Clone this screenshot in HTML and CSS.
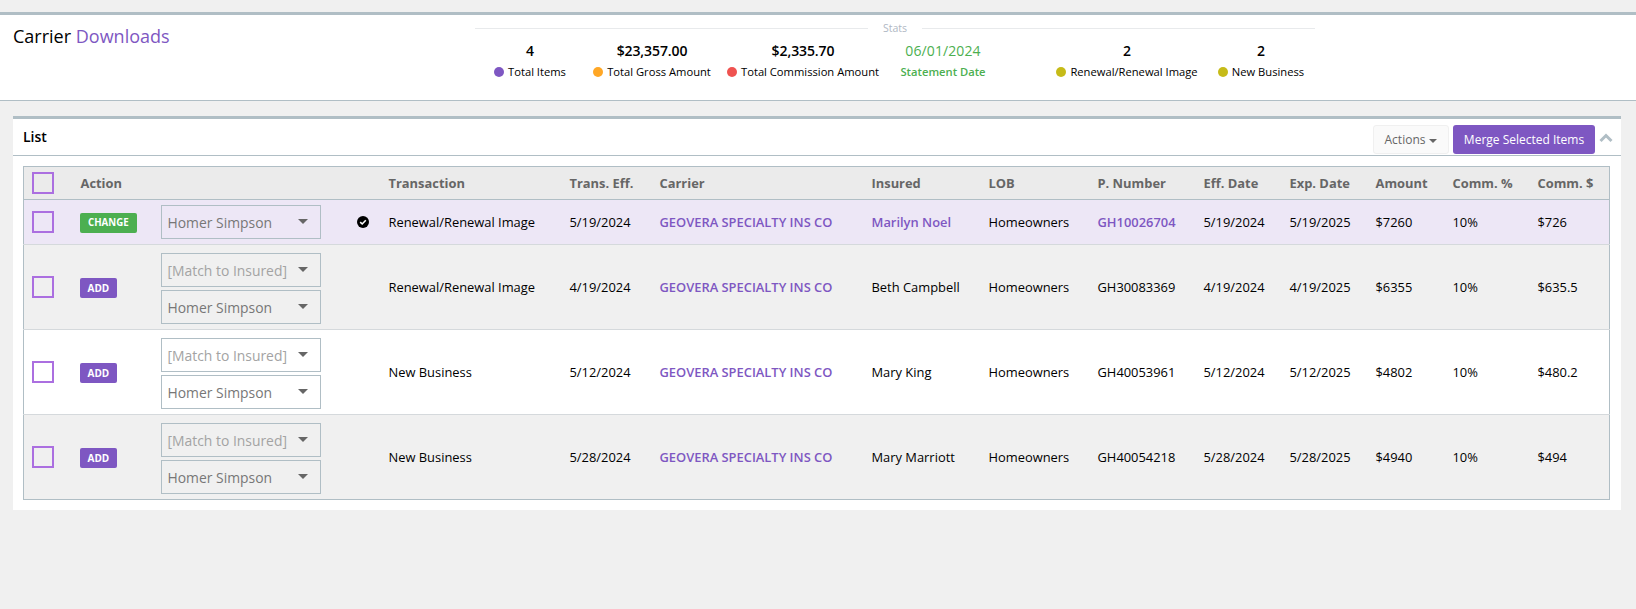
FILE: index.html
```html
<!DOCTYPE html>
<html lang="en">
<head>
<meta charset="utf-8">
<title>Carrier Downloads</title>
<link rel="stylesheet" href="styles.css">
</head>
<body>
<header class="topbar">
  <h1 class="title">Carrier <span class="accent">Downloads</span></h1>
  <section class="stats">
    <div class="stats-legend"><span>Stats</span></div>
    <div class="stats-row">
      <div class="stat s1"><b>4</b><span class="lab"><i class="dot purple"></i>Total Items</span></div>
      <div class="stat s2"><b>$23,357.00</b><span class="lab"><i class="dot orange"></i>Total Gross Amount</span></div>
      <div class="stat s3"><b>$2,335.70</b><span class="lab"><i class="dot red"></i>Total Commission Amount</span></div>
      <div class="stat s4 green"><b>06/01/2024</b><span class="lab">Statement Date</span></div>
      <div class="stat s5"><b>2</b><span class="lab"><i class="dot olive"></i>Renewal/Renewal Image</span></div>
      <div class="stat s6"><b>2</b><span class="lab"><i class="dot olive"></i>New Business</span></div>
    </div>
  </section>
</header>

<main class="panel">
  <div class="panel-head">
    <h2 class="panel-title">List</h2>
    <div class="panel-tools">
      <button class="btn-actions">Actions<i class="caret-small"></i></button>
      <button class="btn-merge">Merge Selected Items</button>
      <svg class="chev" viewBox="0 0 14 10" width="14" height="10"><path d="M1.5 8 7 2.5 12.5 8" fill="none" stroke="#b0bec5" stroke-width="3"/></svg>
    </div>
  </div>
  <div class="panel-body">
    <table class="grid">
      <colgroup>
        <col class="c-check"><col class="c-action"><col class="c-select"><col class="c-flag"><col class="c-trans"><col class="c-eff"><col class="c-carrier"><col class="c-insured"><col class="c-lob"><col class="c-pnum"><col class="c-effd"><col class="c-expd"><col class="c-amt"><col class="c-pct"><col class="c-comm">
      </colgroup>
      <thead>
        <tr>
          <th><span class="box"></span></th><th class="th-action">Action</th><th></th><th></th><th>Transaction</th><th>Trans. Eff.</th><th>Carrier</th><th>Insured</th><th>LOB</th><th>P. Number</th><th>Eff. Date</th><th>Exp. Date</th><th>Amount</th><th>Comm. %</th><th>Comm. $</th>
        </tr>
      </thead>
      <tbody>
        <tr class="r-sel">
          <td><span class="box"></span></td>
          <td><span class="tag tag-change">CHANGE</span></td>
          <td><div class="sel"><span>Homer Simpson</span><i class="caret"></i></div></td>
          <td class="flag"><svg class="ok" viewBox="0 0 12 12" width="12" height="12"><circle cx="6" cy="6" r="6" fill="#000"/><path d="M3.2 6.1 5.2 8 8.8 4.3" fill="none" stroke="#fff" stroke-width="1.6"/></svg></td>
          <td>Renewal/Renewal Image</td><td>5/19/2024</td><td><a class="link">GEOVERA SPECIALTY INS CO</a></td><td><a class="link">Marilyn Noel</a></td><td>Homeowners</td><td><a class="link">GH10026704</a></td><td>5/19/2024</td><td>5/19/2025</td><td>$7260</td><td>10%</td><td>$726</td>
        </tr>
        <tr class="r-alt">
          <td><span class="box"></span></td>
          <td><span class="tag tag-add">ADD</span></td>
          <td class="sels"><div class="sel muted"><span>[Match to Insured]</span><i class="caret"></i></div><div class="sel"><span>Homer Simpson</span><i class="caret"></i></div></td>
          <td></td>
          <td>Renewal/Renewal Image</td><td>4/19/2024</td><td><a class="link">GEOVERA SPECIALTY INS CO</a></td><td>Beth Campbell</td><td>Homeowners</td><td>GH30083369</td><td>4/19/2024</td><td>4/19/2025</td><td>$6355</td><td>10%</td><td>$635.5</td>
        </tr>
        <tr>
          <td><span class="box"></span></td>
          <td><span class="tag tag-add">ADD</span></td>
          <td class="sels"><div class="sel muted"><span>[Match to Insured]</span><i class="caret"></i></div><div class="sel"><span>Homer Simpson</span><i class="caret"></i></div></td>
          <td></td>
          <td>New Business</td><td>5/12/2024</td><td><a class="link">GEOVERA SPECIALTY INS CO</a></td><td>Mary King</td><td>Homeowners</td><td>GH40053961</td><td>5/12/2024</td><td>5/12/2025</td><td>$4802</td><td>10%</td><td>$480.2</td>
        </tr>
        <tr class="r-alt">
          <td><span class="box"></span></td>
          <td><span class="tag tag-add">ADD</span></td>
          <td class="sels"><div class="sel muted"><span>[Match to Insured]</span><i class="caret"></i></div><div class="sel"><span>Homer Simpson</span><i class="caret"></i></div></td>
          <td></td>
          <td>New Business</td><td>5/28/2024</td><td><a class="link">GEOVERA SPECIALTY INS CO</a></td><td>Mary Marriott</td><td>Homeowners</td><td>GH40054218</td><td>5/28/2024</td><td>5/28/2025</td><td>$4940</td><td>10%</td><td>$494</td>
        </tr>
      </tbody>
    </table>
  </div>
</main>
</body>
</html>
```
FILE: styles.css
```css
* { box-sizing: border-box; }
html, body { margin: 0; }
body {
  background: #f0f0f0;
  font-family: "Open Sans", "Noto Sans", sans-serif;
  color: #000;
  padding-top: 12px;
  height: 609px;
  overflow: hidden;
}
.topbar {
  height: 89px;
  background: #fff;
  border-top: 3px solid #b0bec5;
  border-bottom: 1px solid #b0bec5;
  display: flex;
  padding-left: 13px;
}
.title {
  margin: 9px 0 0;
  width: 462px;
  font-size: 18px;
  line-height: 24px;
  font-weight: 400;
}
.accent { color: #7e57c2; }
.stats { width: 840px; }
.stats-legend {
  display: flex;
  align-items: center;
  font-size: 10.5px;
  color: #b0b8c4;
  line-height: 14px;
  height: 14px;
  margin-top: 6px;
}
.stats-legend::before, .stats-legend::after {
  content: "";
  flex: 1;
  border-top: 1px solid #e8eaec;
}
.stats-legend span { padding: 0 15px; }
.stats-row { display: flex; margin-top: 5px; }
.stat {
  display: flex;
  flex-direction: column;
  align-items: center;
  white-space: nowrap;
}
.stat b { font-size: 14px; line-height: 22px; font-weight: 600; letter-spacing: -0.1px; }
.lab {
  display: flex;
  align-items: center;
  font-size: 11.2px;
  line-height: 20px;
}
.s1 { width: 110px; }
.s2 { width: 134px; }
.s3 { width: 168px; }
.s4 { width: 112px; }
.s5 { width: 160px; margin-left: 48px; }
.s6 { width: 108px; }
.green { color: #4caf50; }
.green b { font-weight: 500; letter-spacing: 0.1px; }
.green .lab { font-weight: 600; }
.dot {
  width: 10px;
  height: 10px;
  border-radius: 50%;
  margin-right: 4px;
  margin-top: -1px;
}
.purple { background: #7e57c2; }
.orange { background: #ffa726; }
.red { background: #ef5350; }
.olive { background: #c6bb18; }

.panel {
  margin: 15px 15px 0 13px;
  background: #fff;
  border-top: 3px solid #b0bec5;
  padding-bottom: 10px;
}
.panel-head {
  height: 37px;
  display: flex;
  align-items: center;
  justify-content: space-between;
  padding-left: 10px;
  border-bottom: 1px solid #b0bec5;
  margin-bottom: 10px;
}
.panel-title {
  margin: 0;
  font-size: 14px;
  font-weight: 600;
  line-height: 24px;
}
.panel-tools { display: flex; align-items: center; gap: 4px; padding-right: 8px; margin-top: 4px; }
.btn-actions, .btn-merge {
  font-family: inherit;
  font-size: 12px;
  height: 29px;
  padding: 0;
  border-radius: 3px;
}
.btn-actions {
  width: 76px;
  background: #fafafa;
  border: 1px solid #f0f0f0;
  color: #666;
}
.caret-small {
  display: inline-block;
  margin-left: 4px;
  border-top: 4px solid #666;
  border-left: 4px solid transparent;
  border-right: 4px solid transparent;
  vertical-align: 1px;
}
.btn-merge {
  width: 142px;
  background: #7e57c2;
  border: 0;
  color: #fff;
}
.chev { margin: -3px 0 0 0; }
.panel-body { padding: 0 11px 0 10px; }

.grid {
  width: 100%;
  table-layout: fixed;
  border-collapse: collapse;
  border: 1px solid #b0bec5;
  font-size: 12.9px;
}
.c-check { width: 54px; }
.c-action { width: 81px; }
.c-select { width: 191px; }
.c-flag { width: 37px; }
.c-trans { width: 181px; }
.c-eff { width: 90px; }
.c-carrier { width: 212px; }
.c-insured { width: 117px; }
.c-lob { width: 109px; }
.c-pnum { width: 106px; }
.c-effd { width: 86px; }
.c-expd { width: 86px; }
.c-amt { width: 77px; }
.c-pct { width: 85px; }
.c-comm { width: auto; }
.grid th {
  height: 33px;
  background: #ebebeb;
  color: #666;
  font-weight: 700;
  text-align: left;
  padding: 0 0 0 2px;
  border-bottom: 1px solid #b0bec5;
}
.grid th.th-action { padding-left: 3px; }
.grid td {
  padding: 0 0 0 2px;
  vertical-align: middle;
  border-bottom: 1px solid #d5d9dc;
  white-space: nowrap;
}
.grid th:first-child, .grid td:first-child { padding-left: 8px; }
.grid tbody tr:last-child td { border-bottom: 0; }
.grid td.flag { padding-left: 7px; }
.grid td.sels { padding-top: 3px; }
.r-alt td { background: #f0f0f0; }
tbody tr td { height: 85px; }
tbody tr.r-sel td { background: #ede7f6; height: 45px; }
.box {
  display: block;
  width: 22px;
  height: 22px;
  border: 2px solid #ab6fe0;
  background: transparent;
}
.tag {
  display: inline-block;
  height: 20px;
  line-height: 20px;
  padding: 0 8px;
  font-size: 10px;
  font-weight: 700;
  color: #fff;
  border-radius: 2px;
  vertical-align: middle;
  position: relative;
  top: 1px;
}
.tag-change { background: #4caf50; padding: 0 8.5px; font-size: 9.7px; }
.tag-add { background: #7e57c2; }
.sel {
  position: relative;
  width: 160px;
  height: 34px;
  border: 1px solid #b0bec5;
  color: #777;
  font-size: 13.9px;
  line-height: 33px;
  padding-left: 6px;
}
.sel + .sel { margin-top: 3px; }
.sel.muted { color: #a3a3a3; }
.caret {
  position: absolute;
  right: 12px;
  top: 13px;
  border-top: 5px solid #666;
  border-left: 5px solid transparent;
  border-right: 5px solid transparent;
}
.ok { display: block; }
.link { color: #7e57c2; font-weight: 600; }
```
